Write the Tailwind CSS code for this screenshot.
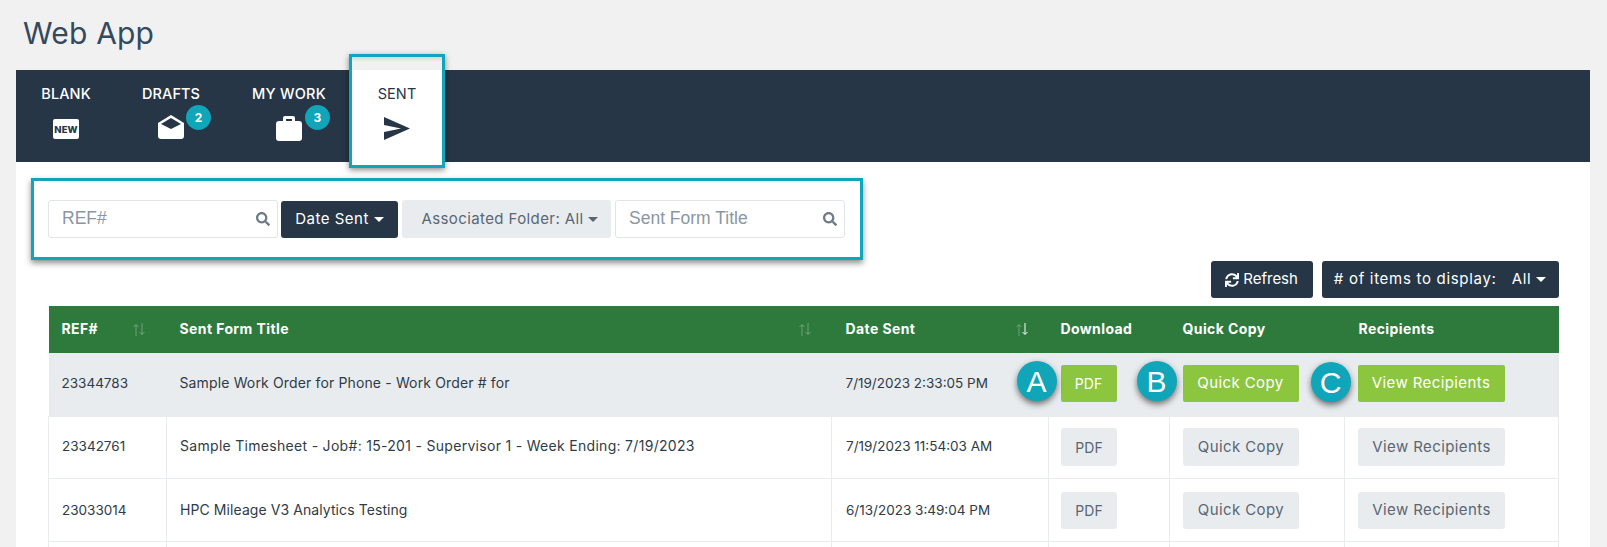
<!DOCTYPE html>
<html lang="en">
<head>
<meta charset="UTF-8" />
<script src="https://cdn.jsdelivr.net/npm/@tailwindcss/browser@4"></script>
<title>Web App</title>
</head>
<body class="bg-[#f1f1f1] font-['Inter',sans-serif] h-[547px] overflow-hidden">
	<h1 class="pl-[23px] pt-[14px] h-[70px] text-[30px] tracking-[0.2px] leading-[38px] text-[#34495e]">Web App</h1>
	<div class="mx-[16px] w-[1574px] bg-white h-[477px]">
		<!-- tabs -->
		<nav class="flex h-[92px] bg-[#263646] text-white text-[14.500px] leading-[20px] tracking-[0.1px]">
			<a class="w-[100px] flex flex-col items-center pt-[14px] font-medium">
				<span>BLANK</span>
				<svg class="mt-[15px]" width="26" height="20" viewBox="0 0 26 20"><rect width="26" height="20" rx="2" fill="#fff"/><text x="13" y="14" text-anchor="middle" font-size="9.500" font-weight="800" fill="#263646">NEW</text></svg>
			</a>
			<a class="w-[110px] flex flex-col items-center pt-[14px] relative font-medium">
				<span>DRAFTS</span>
				<svg class="mt-[11px]" width="26" height="24" viewBox="0 0 26 24"><path d="M13 0L26 8V21a3 3 0 0 1-3 3H3a3 3 0 0 1-3-3V8Z" fill="#fff"/><path d="M13 3L23 9 13 14 3 9Z" fill="#263646"/></svg>
				<span class="absolute left-[70px] top-[35px] w-[25px] h-[25px] rounded-full bg-[#10a5b8] text-[12px] font-bold flex items-center justify-center">2</span>
			</a>
			<a class="w-[126px] flex flex-col items-center pt-[14px] relative font-medium tracking-[0.3px]">
				<span>MY WORK</span>
				<svg class="mt-[12px]" width="26" height="25" viewBox="0 0 26 25"><path d="M7 5V2a2 2 0 0 1 2-2h8a2 2 0 0 1 2 2v3h4a3 3 0 0 1 3 3v14a3 3 0 0 1-3 3H3a3 3 0 0 1-3-3V8a3 3 0 0 1 3-3ZM10 5h6V3h-6Z" fill="#fff" fill-rule="evenodd"/></svg>
				<span class="absolute left-[79px] top-[35px] w-[25px] h-[25px] rounded-full bg-[#10a5b8] text-[12px] font-bold flex items-center justify-center">3</span>
			</a>
			<div class="ml-[-3px] mt-[-16px] w-[96px] h-[114px] border-[3px] border-[#10a5b8] shadow-[0_2px_6px_rgba(0,0,0,0.45)] z-10 bg-[linear-gradient(#d8d8d8,#f1f1f1_5px,#f1f1f1_13px,#fff_13px)] text-[#263646] flex flex-col items-center pt-[27px]">
				<span>SENT</span>
				<svg class="mt-[13px]" width="26" height="23" viewBox="0 0 26 23"><path d="M0 0L26 11.500 0 23 0 15 17 11.500 0 8Z" fill="#263646"/></svg>
			</div>
		</nav>
		<!-- filters -->
		<div class="ml-[15px] mt-[16px] w-[832px] h-[82px] border-[3px] border-[#10a5b8] shadow-[0_3px_6px_rgba(0,0,0,0.45)] pl-[14px] pt-[19px] flex gap-[3px] items-start">
			<div class="w-[230px] h-[38px] border border-[#e1e4e8] rounded-[3px] relative flex items-center pl-[13px] pb-[2px] font-['Liberation_Sans',sans-serif] text-[17.500px] text-[#8a96a3]">REF#
				<svg class="absolute right-[7px] top-[11px]" width="14" height="14" viewBox="0 0 512 512"><path fill="#6c7a89" d="M505 442.700L405.300 343c-4.500-4.500-10.600-7-17-7H372c27.600-35.300 44-79.700 44-128C416 93.100 322.900 0 208 0S0 93.100 0 208s93.100 208 208 208c48.300 0 92.700-16.400 128-44v16.300c0 6.400 2.500 12.500 7 17l99.700 99.700c9.400 9.400 24.600 9.400 33.900 0l28.300-28.300c9.400-9.400 9.400-24.600.1-34zM208 336c-70.700 0-128-57.200-128-128 0-70.700 57.200-128 128-128 70.700 0 128 57.200 128 128 0 70.700-57.200 128-128 128z"/></svg>
			</div>
			<button class="w-[117px] h-[37px] mt-[1px] bg-[#263646] text-white rounded-[3px] text-[15px] tracking-[0.5px] flex items-center justify-center gap-[5px]">Date Sent <span class="w-0 h-0 border-x-[5px] border-x-transparent border-t-[5px] border-t-white"></span></button>
			<button class="ml-[1px] w-[209px] h-[38px] pl-[6px] bg-[#e9ecef] text-[#5a6672] rounded-[3px] text-[15px] tracking-[0.4px] flex items-center justify-center gap-[4px]">Associated Folder: All <span class="w-0 h-0 border-x-[5px] border-x-transparent border-t-[5px] border-t-[#5a6672]"></span></button>
			<div class="ml-[1px] w-[230px] h-[38px] border border-[#e1e4e8] rounded-[3px] relative flex items-center pl-[13px] pb-[2px] font-['Liberation_Sans',sans-serif] text-[17.500px] text-[#8a96a3]">Sent Form Title
				<svg class="absolute right-[7px] top-[11px]" width="14" height="14" viewBox="0 0 512 512"><path fill="#6c7a89" d="M505 442.700L405.300 343c-4.500-4.500-10.600-7-17-7H372c27.600-35.300 44-79.700 44-128C416 93.100 322.900 0 208 0S0 93.100 0 208s93.100 208 208 208c48.300 0 92.700-16.400 128-44v16.300c0 6.400 2.500 12.500 7 17l99.700 99.700c9.400 9.400 24.600 9.400 33.900 0l28.300-28.300c9.400-9.400 9.400-24.600.1-34zM208 336c-70.700 0-128-57.200-128-128 0-70.700 57.200-128 128-128 70.700 0 128 57.200 128 128 0 70.700-57.200 128-128 128z"/></svg>
			</div>
		</div>
		<!-- table tools -->
		<div class="mt-[1px] w-[1542.600px] flex justify-end gap-[9px] text-[15px] text-white">
			<button class="w-[102px] h-[37px] bg-[#263646] rounded-[3px] flex items-center justify-center gap-[4px]">
				<svg width="14" height="14" viewBox="0 0 512 512"><path fill="#fff" d="M440.650 12.570l4 82.770A247.160 247.160 0 0 0 255.830 8C134.730 8 33.910 94.920 12.290 209.820A12 12 0 0 0 24.090 224h49.050a12 12 0 0 0 11.670-9.260 175.910 175.910 0 0 1 317-56.940l-101.460-4.860a12 12 0 0 0-12.570 12v47.410a12 12 0 0 0 12 12H500a12 12 0 0 0 12-12V12a12 12 0 0 0-12-12h-47.370a12 12 0 0 0-11.980 12.570zM255.830 432a175.610 175.610 0 0 1-146-77.800l101.800 4.870a12 12 0 0 0 12.570-12v-47.400a12 12 0 0 0-12-12H12a12 12 0 0 0-12 12V500a12 12 0 0 0 12 12h47.350a12 12 0 0 0 12-12.600l-4.150-82.570A247.170 247.170 0 0 0 255.830 504c121.110 0 221.930-86.920 243.550-201.820a12 12 0 0 0-11.800-14.180h-49.050a12 12 0 0 0-11.670 9.260A175.860 175.860 0 0 1 255.830 432z"/></svg>
				Refresh
			</button>
			<button class="w-[237px] h-[37px] bg-[#263646] rounded-[3px] flex items-center justify-center gap-[5px] tracking-[0.7px]"># of items to display: <span class="ml-[10px]">All</span> <span class="w-0 h-0 border-x-[5px] border-x-transparent border-t-[5px] border-t-white"></span></button>
		</div>
		<!-- table -->
		<table class="mt-[8px] ml-[32px] w-[1510px] table-fixed border-collapse text-[13.500px] text-[#2f3b47]">
			<colgroup>
				<col class="w-[118px]" /><col class="w-[665px]" /><col class="w-[217px]" /><col class="w-[121px]" /><col class="w-[175px]" /><col class="w-[214px]" />
			</colgroup>
			<thead class="bg-[#2e7a3c] text-white text-left font-bold text-[14px] tracking-[0.4px]">
				<tr class="h-[47px]">
					<th class="pl-[13px] pb-[3px] relative">REF#<svg class="absolute right-[21px] top-[17px]" width="14" height="13" viewBox="0 0 14 13"><path d="M4 13V2M1.500 4L4 1.500 6.500 4M10 0V11M7.500 9L10 11.500 12.500 9" fill="none" stroke="#fff" stroke-opacity="0.3"/></svg></th>
					<th class="pl-[13px] pb-[3px] relative">Sent Form Title<svg class="absolute right-[20px] top-[17px]" width="14" height="13" viewBox="0 0 14 13"><path d="M4 13V2M1.500 4L4 1.500 6.500 4M10 0V11M7.500 9L10 11.500 12.500 9" fill="none" stroke="#fff" stroke-opacity="0.3"/></svg></th>
					<th class="pl-[14px] pb-[3px] relative">Date Sent<svg class="absolute right-[20px] top-[17px]" width="14" height="13" viewBox="0 0 14 13"><path d="M4 13V2M1.500 4L4 1.500 6.500 4" fill="none" stroke="#fff" stroke-opacity="0.3"/><path d="M10 0V11M7.500 9L10 11.500 12.500 9" fill="none" stroke="#fff"/></svg></th>
					<th class="pl-[12px] pb-[3px]">Download</th>
					<th class="pl-[13px] pb-[3px]">Quick Copy</th>
					<th class="pl-[14px] pb-[3px]">Recipients</th>
				</tr>
			</thead>
			<tbody>
				<tr class="h-[63px] bg-[#e9ecef]">
					<td class="pl-[13px] pb-[2px]">23344783</td>
					<td class="pl-[13px] pb-[4px] text-[14px] tracking-[0.14px]">Sample Work Order for Phone - Work Order # for</td>
					<td class="pl-[14px] pb-[2px]">7/19/2023 2:33:05 PM</td>
					<td class="pl-[12px] pb-[2px] relative">
						<span class="absolute left-[-32px] top-[8px] w-[40px] h-[40px] rounded-full bg-[#10a5b8] text-white text-[30px] font-['Liberation_Sans',sans-serif] flex items-center justify-center shadow-[0_3px_6px_rgba(0,0,0,0.55)]">A</span>
						<button class="w-[56px] h-[37px] bg-[#8cc63f] text-white rounded-[2px] text-[14px]">PDF</button>
					</td>
					<td class="pl-[13px] pb-[2px] relative">
						<span class="absolute left-[-33px] top-[8px] w-[40px] h-[40px] rounded-full bg-[#10a5b8] text-white text-[30px] font-['Liberation_Sans',sans-serif] flex items-center justify-center shadow-[0_3px_6px_rgba(0,0,0,0.55)]">B</span>
						<button class="w-[116px] h-[37px] bg-[#8cc63f] text-white rounded-[2px] text-[15px] tracking-[0.4px]">Quick Copy</button>
					</td>
					<td class="pl-[13px] pb-[2px] relative">
						<span class="absolute left-[-34px] top-[9px] w-[40px] h-[40px] rounded-full bg-[#10a5b8] text-white text-[30px] font-['Liberation_Sans',sans-serif] flex items-center justify-center shadow-[0_3px_6px_rgba(0,0,0,0.55)]">C</span>
						<button class="w-[147px] h-[37px] bg-[#8cc63f] text-white rounded-[2px] text-[15px] tracking-[0.4px]">View Recipients</button>
					</td>
				</tr>
				<tr class="h-[62px]">
					<td class="pl-[13px] pb-[2px] border border-[#e9ecef]">23342761</td>
					<td class="pl-[13px] pb-[4px] border border-[#e9ecef] text-[14px] tracking-[0.3px]">Sample Timesheet - Job#: 15-201 - Supervisor 1 - Week Ending: 7/19/2023</td>
					<td class="pl-[14px] pb-[2px] border border-[#e9ecef]">7/19/2023 11:54:03 AM</td>
					<td class="pl-[12px] border border-[#e9ecef]"><button class="w-[56px] h-[38px] bg-[#e9ecef] text-[#5a6672] rounded-[3px] text-[14px]">PDF</button></td>
					<td class="pl-[13px] border border-[#e9ecef]"><button class="w-[116px] h-[38px] bg-[#e9ecef] text-[#5a6672] rounded-[3px] text-[15px] tracking-[0.4px]">Quick Copy</button></td>
					<td class="pl-[13px] border border-[#e9ecef]"><button class="w-[147px] h-[38px] bg-[#e9ecef] text-[#5a6672] rounded-[3px] text-[15px] tracking-[0.4px]">View Recipients</button></td>
				</tr>
				<tr class="h-[63px]">
					<td class="pl-[13px] pt-[2px] border border-[#e9ecef]">23033014</td>
					<td class="pl-[13px] border border-[#e9ecef] text-[14px] tracking-[0.08px]">HPC Mileage V3 Analytics Testing</td>
					<td class="pl-[14px] pt-[2px] border border-[#e9ecef]">6/13/2023 3:49:04 PM</td>
					<td class="pl-[12px] pt-[2px] border border-[#e9ecef]"><button class="w-[56px] h-[37px] bg-[#e9ecef] text-[#5a6672] rounded-[3px] text-[14px]">PDF</button></td>
					<td class="pl-[13px] pt-[2px] border border-[#e9ecef]"><button class="w-[116px] h-[37px] bg-[#e9ecef] text-[#5a6672] rounded-[3px] text-[15px] tracking-[0.4px]">Quick Copy</button></td>
					<td class="pl-[13px] pt-[2px] border border-[#e9ecef]"><button class="w-[147px] h-[37px] bg-[#e9ecef] text-[#5a6672] rounded-[3px] text-[15px] tracking-[0.4px]">View Recipients</button></td>
				</tr>
				<tr class="h-[6px]">
					<td class="border-x border-[#e9ecef]"></td><td class="border-x border-[#e9ecef]"></td><td class="border-x border-[#e9ecef]"></td><td class="border-x border-[#e9ecef]"></td><td class="border-x border-[#e9ecef]"></td><td class="border-x border-[#e9ecef]"></td>
				</tr>
			</tbody>
		</table>
	</div>
</body>
</html>
